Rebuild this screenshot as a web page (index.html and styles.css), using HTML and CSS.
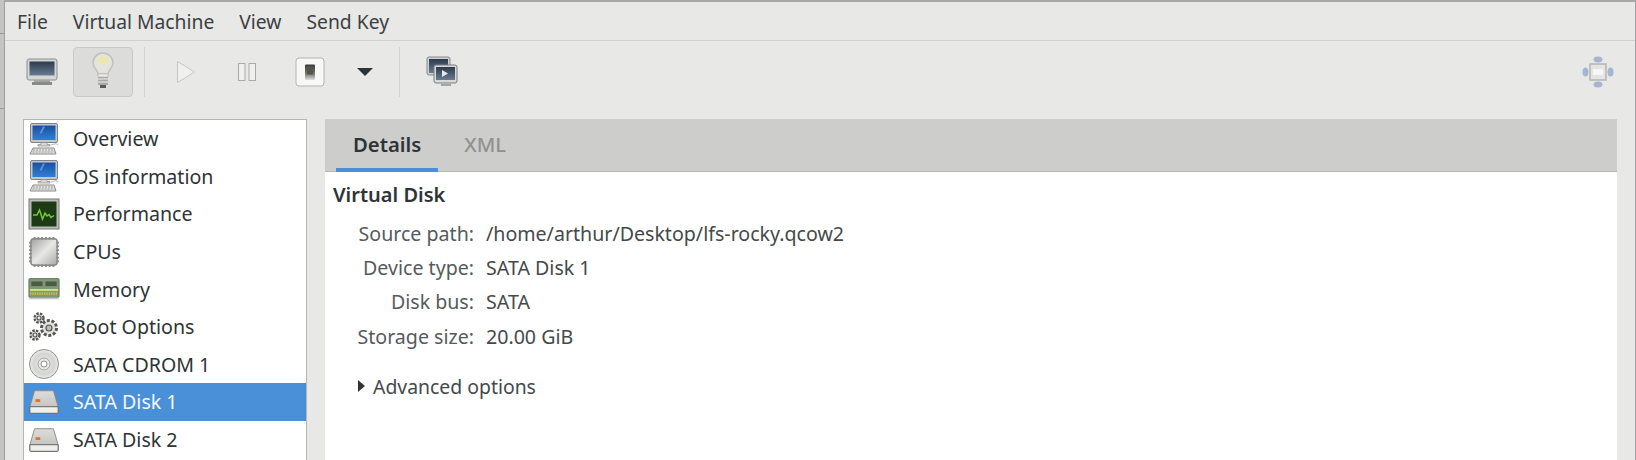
FILE: index.html
```html
<!DOCTYPE html>
<html lang="en">
<head>
<meta charset="utf-8">
<title>Virtual Machine</title>
<link rel="stylesheet" href="styles.css">
</head>
<body>
<svg class="defs" width="0" height="0" aria-hidden="true">
  <defs>
    <linearGradient id="blue" x1="0" y1="0" x2="0" y2="1"><stop offset="0" stop-color="#1c4f9e"/><stop offset="1" stop-color="#2f7fd6"/></linearGradient>
    <linearGradient id="steel" x1="0" y1="0" x2="0" y2="1"><stop offset="0" stop-color="#2c3a4c"/><stop offset="1" stop-color="#6a7c92"/></linearGradient>
    <linearGradient id="chip" x1="0" y1="0" x2="1" y2="1"><stop offset="0" stop-color="#a0a09e"/><stop offset=".5" stop-color="#e8e8e6"/><stop offset="1" stop-color="#aaaaa8"/></linearGradient>
    <linearGradient id="disk" x1="0" y1="0" x2="0" y2="1"><stop offset="0" stop-color="#dcdcda"/><stop offset="1" stop-color="#bcbcba"/></linearGradient>
    <linearGradient id="sw" x1="0" y1="0" x2="0" y2="1"><stop offset="0" stop-color="#3a3a38"/><stop offset=".6" stop-color="#77776f"/><stop offset="1" stop-color="#e0e0de"/></linearGradient>
    <radialGradient id="cd"><stop offset="0" stop-color="#f4f4f2"/><stop offset=".7" stop-color="#d4d4d2"/><stop offset="1" stop-color="#ecece8"/></radialGradient>
    <symbol id="computer" viewBox="0 0 32 32">
      <rect x="2.500" y="0.500" width="27" height="19" rx="1.500" fill="#c4c8cc" stroke="#7d8286"/>
      <rect x="4.500" y="2.500" width="23" height="14.500" fill="url(#blue)"/>
      <path d="M15 3.500l-3.500 7h2l3.500-7z" fill="#5d95d8"/>
      <path d="M13 19.500h6v2h3v1.500H10v-1.500h3z" fill="#d8d8d6" stroke="#8a8a88" stroke-width=".7"/>
      <path d="M5 25h21l2 6H2z" fill="#e4e4e2" stroke="#8a8a88"/>
      <path d="M5 27h21M4.500 29h22" stroke="#9a9a98" stroke-dasharray="2 1"/>
      <path d="M23 22c3-1 6-2 7 0" fill="none" stroke="#b0b0ae"/>
    </symbol>
    <symbol id="perf" viewBox="0 0 32 32">
      <rect x="1" y="1" width="30" height="30" fill="#b9bcb8" stroke="#777a76"/>
      <rect x="3.500" y="3.500" width="25" height="25" fill="#1d3a14"/>
      <path d="M5 17h4l2.500-5 3 9 2.500-6 2 3 2-1.500 2 3 3-2" fill="none" stroke="#6ecb38" stroke-width="1.500"/>
    </symbol>
    <symbol id="cpu" viewBox="0 0 34 34">
      <path d="M6 3h22a3 3 0 0 1 3 3v22a3 3 0 0 1-3 3H6a3 3 0 0 1-3-3V6a3 3 0 0 1 3-3z" fill="url(#chip)" stroke="#8a8a88" stroke-width="1.500"/>
      <path d="M7 1v3M11 1v3M15 1v3M19 1v3M23 1v3M27 1v3M7 30v3M11 30v3M15 30v3M19 30v3M23 30v3M27 30v3M1 7h3M1 11h3M1 15h3M1 19h3M1 23h3M1 27h3M30 7h3M30 11h3M30 15h3M30 19h3M30 23h3M30 27h3" stroke="#8a8a88" stroke-width="2"/>
    </symbol>
    <symbol id="memory" viewBox="0 0 34 34">
      <rect x="1" y="6" width="32" height="20" rx="1" fill="#7f9b72" stroke="#5c6f55"/>
      <rect x="3.500" y="9" width="12" height="5" fill="#4d5a4a"/><rect x="18.500" y="9" width="12" height="5" fill="#4d5a4a"/>
      <rect x="2" y="17" width="30" height="2" fill="#d3e07e"/>
      <path d="M2 22h30" stroke="#c9b94e" stroke-width="3" stroke-dasharray="1.500 1"/>
      <rect x="1" y="26" width="32" height="2" fill="#c8c8c6"/>
    </symbol>
    <symbol id="gears" viewBox="0 0 32 32">
      <g fill="#e4e4e2" stroke="#555753" stroke-width="1.200">
        <circle cx="11" cy="7" r="4.500" stroke-dasharray="2.400 1.200" stroke-width="2.400"/>
        <circle cx="11" cy="7" r="2"/>
        <circle cx="7" cy="24" r="4.500" stroke-dasharray="2.400 1.200" stroke-width="2.400"/>
        <circle cx="7" cy="24" r="2"/>
        <circle cx="21" cy="17" r="7.500" stroke-dasharray="3 1.700" stroke-width="3"/>
        <circle cx="21" cy="17" r="3" fill="#bbb"/>
      </g>
    </symbol>
    <symbol id="cdrom" viewBox="0 0 32 32">
      <circle cx="16" cy="16" r="14.500" fill="url(#cd)" stroke="#8f8f8d"/>
      <circle cx="16" cy="16" r="6" fill="#e8e8e6" stroke="#a2a2a0"/>
      <circle cx="16" cy="16" r="3" fill="#fff" stroke="#8f8f8d"/>
    </symbol>
    <symbol id="hdd" viewBox="0 0 34 34">
      <path d="M7 5h20l5 17v6a1 1 0 0 1-1 1H3a1 1 0 0 1-1-1v-6z" fill="url(#disk)" stroke="#8b8b89"/>
      <path d="M2 22h30v6a1 1 0 0 1-1 1H3a1 1 0 0 1-1-1z" fill="#efefed" stroke="#5f5f5d"/>
      <rect x="8" y="14" width="5" height="3" fill="#d9772b"/>
    </symbol>
  </defs>
</svg>

<div class="window">
  <nav class="menubar">
    <span class="menu-item">File</span>
    <span class="menu-item">Virtual Machine</span>
    <span class="menu-item">View</span>
    <span class="menu-item">Send Key</span>
  </nav>

  <div class="toolbar">
    <button class="tool tool-console" aria-label="Console">
      <svg width="34" height="30" viewBox="0 0 34 30">
        <rect x="2" y="2" width="30" height="21" rx="2" fill="#d5d6d6" stroke="#8c8f92"/>
        <rect x="4.500" y="4.500" width="25" height="14" fill="url(#steel)"/>
        <rect x="9" y="23" width="16" height="2" fill="#a4a4a2"/>
        <rect x="7" y="25" width="20" height="3" fill="#888a88"/>
      </svg>
    </button>
    <button class="tool tool-bulb" aria-label="Details">
      <svg width="24" height="42" viewBox="0 0 24 42">
        <path d="M12 2a10 10 0 0 1 10 10c0 5-5 7-5 11H7c0-4-5-6-5-11A10 10 0 0 1 12 2z" fill="#e4e4dd" stroke="#c0c0bb" stroke-width="1.500"/>
        <ellipse cx="12" cy="9.500" rx="5.500" ry="4" fill="#ece7ae"/>
        <path d="M7 23h10v3H7z" fill="#eeeeea" stroke="#c0c0bb"/>
        <path d="M7 26h10v8H7z" fill="#a9a9a5"/>
        <path d="M7 28h10M7 31h10" stroke="#f0f0ee" stroke-width="1.200"/>
        <path d="M9 34h6v3H9z" fill="#5a5a58"/>
      </svg>
    </button>
    <span class="tool-sep"></span>
    <button class="tool tool-play" aria-label="Run">
      <svg width="20" height="24" viewBox="0 0 20 24"><path d="M1.500 1.500 18.500 12 1.500 22.500z" fill="#f0f0ee" stroke="#c6c6c4"/></svg>
    </button>
    <button class="tool tool-pause" aria-label="Pause">
      <svg width="20" height="20" viewBox="0 0 20 20"><rect x="1.500" y="1.500" width="6.500" height="17" fill="#f0f0ee" stroke="#a9a9a7"/><rect x="12" y="1.500" width="6.500" height="17" fill="#f0f0ee" stroke="#a9a9a7"/></svg>
    </button>
    <button class="tool tool-power" aria-label="Shut down">
      <svg width="30" height="30" viewBox="0 0 30 30">
        <rect x="1" y="1" width="28" height="28" rx="3" fill="#f8f8f7" stroke="#b3b3b1"/>
        <rect x="10" y="7.500" width="10" height="15.500" rx="1" fill="url(#sw)"/>
        <rect x="12" y="9.500" width="6" height="8" fill="#55554f"/>
      </svg>
    </button>
    <button class="tool tool-caret" aria-label="More">
      <svg width="16" height="8" viewBox="0 0 16 8"><path d="M0 0h16L8 8z" fill="#2e3436"/></svg>
    </button>
    <span class="tool-sep tool-sep-2"></span>
    <button class="tool tool-snap" aria-label="Snapshots">
      <svg width="32" height="32" viewBox="0 0 32 32">
        <rect x="1" y="1" width="23" height="18" rx="2" fill="#cfd0d0" stroke="#85888c"/>
        <rect x="3" y="3" width="19" height="14" fill="url(#steel)"/>
        <rect x="8" y="9" width="23" height="18" rx="2" fill="#d8d9d9" stroke="#7a7d82"/>
        <rect x="10" y="11" width="19" height="13" fill="url(#steel)"/>
        <path d="M16 14v7l6-3.500z" fill="#e8e8e6"/>
        <rect x="15" y="28" width="10" height="2" fill="#a4a4a2"/>
      </svg>
    </button>
    <button class="tool tool-fit" aria-label="Fullscreen">
      <svg width="32" height="32" viewBox="0 0 32 32">
        <ellipse cx="16" cy="3.500" rx="4.500" ry="3" fill="#a5b6d3"/>
        <ellipse cx="16" cy="28.500" rx="4.500" ry="3" fill="#a5b6d3"/>
        <ellipse cx="3.500" cy="16" rx="3" ry="4.500" fill="#a5b6d3"/>
        <ellipse cx="28.500" cy="16" rx="3" ry="4.500" fill="#a5b6d3"/>
        <rect x="8" y="8" width="16" height="16" fill="#e4e4e2" stroke="#b4b4b2" stroke-width="1.500"/>
        <rect x="11" y="13" width="10" height="6" fill="#f6f6f5"/>
      </svg>
    </button>
  </div>

  <div class="main">
    <ul class="hw-list">
      <li class="hw-row"><svg class="ico"><use href="#computer"/></svg><span>Overview</span></li>
      <li class="hw-row"><svg class="ico"><use href="#computer"/></svg><span>OS information</span></li>
      <li class="hw-row"><svg class="ico"><use href="#perf"/></svg><span>Performance</span></li>
      <li class="hw-row"><svg class="ico"><use href="#cpu"/></svg><span>CPUs</span></li>
      <li class="hw-row"><svg class="ico"><use href="#memory"/></svg><span>Memory</span></li>
      <li class="hw-row"><svg class="ico"><use href="#gears"/></svg><span>Boot Options</span></li>
      <li class="hw-row"><svg class="ico"><use href="#cdrom"/></svg><span>SATA CDROM 1</span></li>
      <li class="hw-row is-selected"><svg class="ico"><use href="#hdd"/></svg><span>SATA Disk 1</span></li>
      <li class="hw-row"><svg class="ico"><use href="#hdd"/></svg><span>SATA Disk 2</span></li>
    </ul>

    <section class="panel">
      <div class="tabs">
        <span class="tab is-active">Details</span>
        <span class="tab">XML</span>
      </div>
      <div class="panel-body">
        <h2 class="section-title">Virtual Disk</h2>
        <dl class="props">
          <dt>Source path:</dt><dd>/home/arthur/Desktop/lfs-rocky.qcow2</dd>
          <dt>Device type:</dt><dd>SATA Disk 1</dd>
          <dt>Disk bus:</dt><dd>SATA</dd>
          <dt>Storage size:</dt><dd>20.00 GiB</dd>
        </dl>
        <div class="expander"><span class="arrow"></span>Advanced options</div>
      </div>
    </section>
  </div>
</div>
</body>
</html>
```
FILE: styles.css
```css
* { box-sizing: border-box; }
html, body { margin: 0; height: 460px; overflow: hidden; }
body {
  position: relative;
  background: #c4c4c4;
  color: #2e3436;
  font-family: "Noto Sans", "Open Sans", sans-serif;
  font-size: 19.6px;
}
/* neighbouring window edges showing in the left margin */
body::before, body::after {
  content: "";
  position: absolute;
  left: 0;
  width: 4px;
  height: 1px;
  background: #9a9a9a;
}
body::before { top: 33px; }
body::after { top: 108px; }
.defs { display: block; height: 0; }
.window {
  margin-left: 4px;
  height: 460px;
  display: flex;
  flex-direction: column;
  background: #e8e8e7;
  border-top: 2px solid #a8a8a8;
  border-left: 1px solid #a0a0a0;
  border-right: 1px solid #a0a0a0;
}
.menubar {
  height: 39px;
  flex: none;
  display: flex;
  align-items: center;
  gap: 25px;
  padding-left: 12px;
  border-bottom: 1px solid #d0d0ce;
  font-size: 19.3px;
}
.menu-item { color: #3a3f41; }
.toolbar {
  height: 78px;
  flex: none;
  display: flex;
  align-items: flex-start;
  padding: 6px 0 0 18px;
}
.tool {
  appearance: none;
  border: 0;
  background: none;
  padding: 0;
  height: 50px;
  flex: none;
  display: flex;
  align-items: center;
  justify-content: center;
}
.tool svg { filter: blur(0.4px); }
.tool-console { width: 38px; margin-right: 12px; }
.tool-bulb { width: 60px; background: #dcdcda; border: 1px solid #c9c9c7; border-radius: 4px; }
.tool-sep { width: 1px; height: 50px; background: #d2d2d0; margin: 0 30px 0 11px; flex: none; }
.tool-sep-2 { margin: 0 26px 0 0; }
.tool-play { width: 22px; margin-right: 40px; }
.tool-pause { width: 20px; margin-right: 38px; }
.tool-power { width: 30px; margin-right: 32px; }
.tool-caret { width: 16px; margin-right: 26px; }
.tool-snap { width: 32px; }
.tool-fit { width: 32px; margin-left: auto; margin-right: 21px; }
.main {
  flex: 1;
  display: flex;
  align-items: flex-start;
  padding-left: 18px;
  min-height: 0;
}
.hw-list {
  list-style: none;
  margin: 0;
  padding: 0;
  width: 284px;
  height: 360px;
  flex: none;
  background: #fff;
  border: 1px solid #b6b6b3;
  font-size: 19.6px;
}
.hw-row {
  height: 37.6px;
  display: flex;
  align-items: center;
  padding-left: 4px;
  gap: 13px;
}
.hw-row span { white-space: nowrap; }
.ico { width: 32px; height: 32px; flex: none; filter: blur(0.4px); }
.hw-row.is-selected { background: #4a90d9; color: #f4f8fc; }
.panel {
  margin-left: 18px;
  width: 1292px;
  height: 360px;
  background: #fff;
  flex: none;
}
.tabs {
  height: 53px;
  display: flex;
  padding-left: 11px;
  background: #cdcdcb;
  border-bottom: 1px solid #b7b7b5;
  font-size: 20.3px;
}
.tab {
  padding: 0 17px;
  line-height: 50px;
  margin-right: 9px;
  color: #8f9290;
  font-weight: 500;
}
.tab.is-active { color: #2e3436; font-weight: 600; border-bottom: 4px solid #4a90d9; height: 53px; }
.panel-body { padding: 8px 8px 0; }
.section-title { margin: 0; font-size: 20px; font-weight: 600; line-height: 30px; }
.props {
  margin: 6px 0 0;
  display: grid;
  grid-template-columns: 141px 1fr;
  column-gap: 12px;
  grid-auto-rows: 34.4px;
  align-items: center;
}
.props dt { text-align: right; color: #555a5c; }
.props dd { margin: 0; color: #44494b; }
.expander {
  margin: 19px 0 0 25px;
  display: flex;
  align-items: center;
  gap: 8px;
  color: #44494b;
  font-size: 19.4px;
}
.arrow {
  width: 0;
  height: 0;
  border-left: 7px solid #2e3436;
  border-top: 6px solid transparent;
  border-bottom: 6px solid transparent;
}
```
